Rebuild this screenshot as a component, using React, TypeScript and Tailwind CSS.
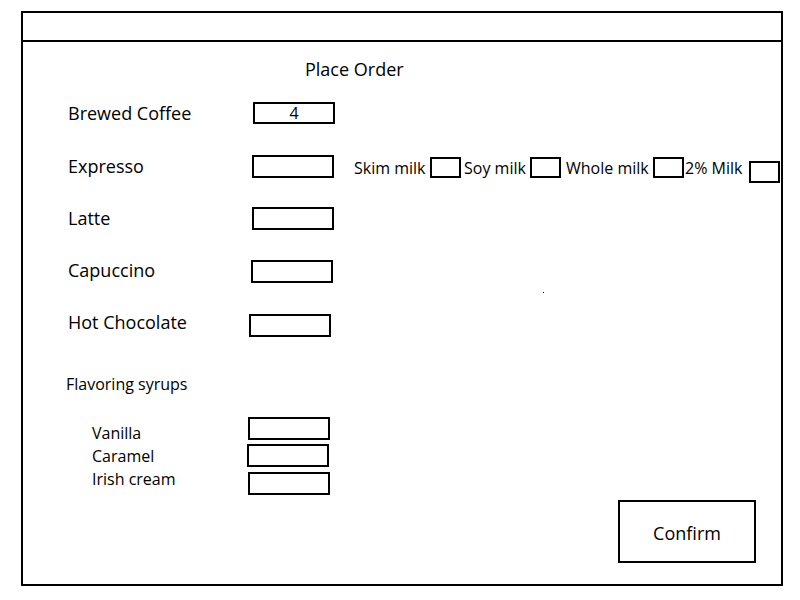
import React from "react";

const Box = ({ className = "", children }: { className?: string; children?: React.ReactNode }) => (
  <div className={`border-2 border-black bg-white flex items-center justify-center ${className}`}>{children}</div>
);

export default function App() {
  return (
    <div className="w-[800px] h-[600px] bg-white pt-[11px] pl-[21px] text-black" style={{ fontFamily: '"Open Sans", "Noto Sans", sans-serif' }}>
      <div className="w-[762px] h-[575px] border-2 border-black flex flex-col">
        <div className="h-[29px] border-b-2 border-black shrink-0" />
        <div className="relative flex flex-col">
          <div className="mt-[14px] h-[26px] flex items-center pl-[282px] text-[18px]">Place Order</div>

          <div className="mt-[20px] h-[22px] flex items-center">
            <span className="pl-[45px] w-[230px] text-[18px] pt-[1px]">Brewed Coffee</span>
            <Box className="w-[82px] h-[22px] text-[16px]">4</Box>
          </div>

          <div className="mt-[31px] h-[23px] flex items-start">
            <span className="pl-[45px] w-[229px] h-[23px] flex items-center text-[18px]">Expresso</span>
            <Box className="w-[82px] h-[23px]" />
            <div className="flex items-start text-[16px] ml-[20px]">
              <span className="w-[76px] h-[23px] flex items-center pt-[2px] whitespace-nowrap">Skim milk</span>
              <Box className="w-[31px] h-[21px] mt-[2px]" />
              <span className="w-[69px] pl-[3px] h-[23px] flex items-center pt-[2px] whitespace-nowrap">Soy milk</span>
              <Box className="w-[31px] h-[21px] mt-[2px]" />
              <span className="w-[92px] pl-[5px] h-[23px] flex items-center pt-[2px] whitespace-nowrap">Whole milk</span>
              <Box className="w-[31px] h-[21px] mt-[2px]" />
              <span className="w-[65px] pl-[1px] h-[23px] flex items-center pt-[2px] whitespace-nowrap">2% Milk</span>
              <Box className="w-[31px] h-[22px] mt-[6px]" />
            </div>
          </div>

          <div className="mt-[29px] h-[23px] flex items-center">
            <span className="pl-[45px] w-[229px] text-[18px]">Latte</span>
            <Box className="w-[82px] h-[23px]" />
          </div>

          <div className="mt-[30px] h-[23px] flex items-center">
            <span className="pl-[45px] w-[228px] text-[18px] pb-[3px]">Capuccino</span>
            <Box className="w-[82px] h-[23px]" />
          </div>

          <div className="mt-[31px] h-[23px] flex items-center">
            <span className="pl-[45px] w-[226px] text-[18px] pb-[7px]">Hot Chocolate</span>
            <Box className="w-[82px] h-[23px]" />
          </div>

          <div className="mt-[37px] h-[20px] flex items-center pl-[43px] text-[16px]">Flavoring syrups</div>

          <div className="mt-[23px] h-[23px] flex items-center text-[16px]">
            <span className="pl-[69px] w-[225px] pt-[9px]">Vanilla</span>
            <Box className="w-[82px] h-[23px]" />
          </div>
          <div className="mt-[4px] h-[23px] flex items-center text-[16px]">
            <span className="pl-[69px] w-[224px]">Caramel</span>
            <Box className="w-[82px] h-[23px]" />
          </div>
          <div className="mt-[5px] h-[23px] flex items-center text-[16px]">
            <span className="pl-[69px] w-[225px] pb-[10px]">Irish cream</span>
            <Box className="w-[82px] h-[23px]" />
          </div>

          <div className="mt-[5px] flex pl-[595px]">
            <Box className="w-[138px] h-[63px] text-[18px] pt-[3px]">Confirm</Box>
          </div>

          <div className="absolute left-[520px] top-[250px] w-px h-px bg-black" />
        </div>
      </div>
    </div>
  );
}
